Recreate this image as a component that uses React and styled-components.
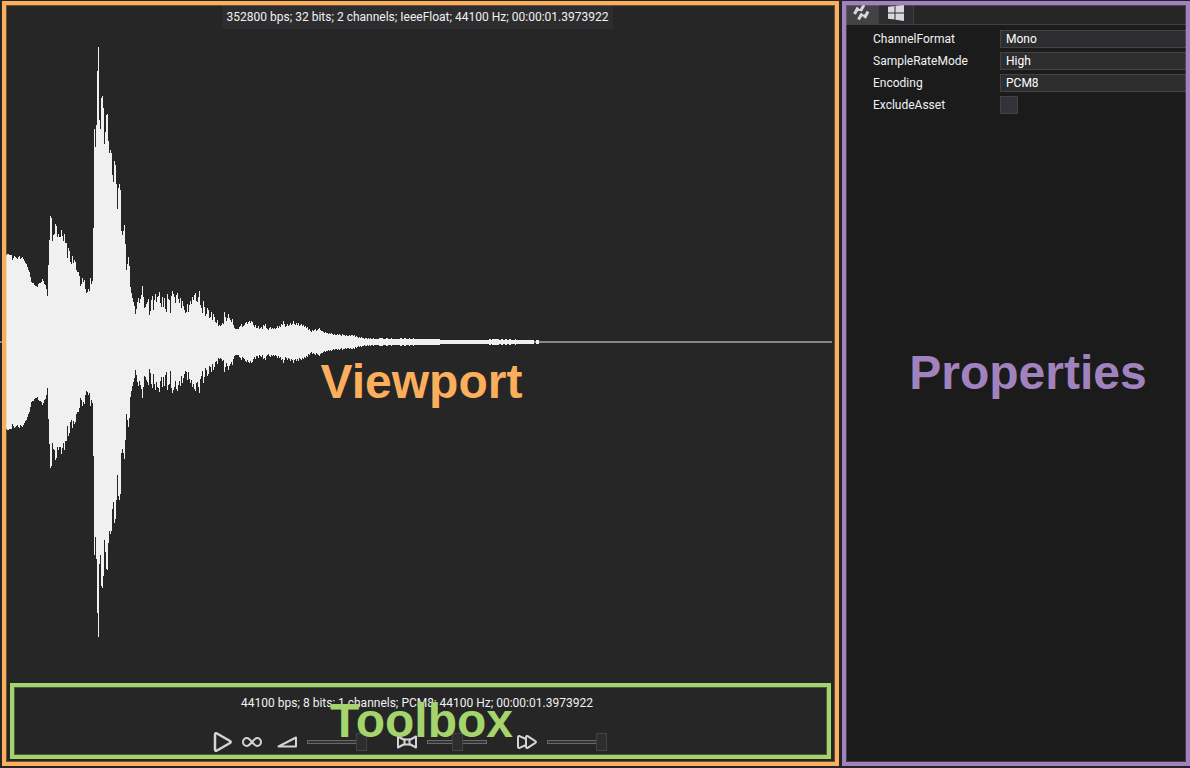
import React from "react";
import styled, { createGlobalStyle } from "styled-components";

const GlobalStyle = createGlobalStyle`
  *, *::before, *::after { box-sizing: border-box; }
  body {
    margin: 0;
    background: #242427;
    color: #f1f1f1;
    font: 400 12px/16px Roboto, "Liberation Sans", sans-serif;
  }
`;

const Page = styled.main`
  display: grid;
  grid-template-columns: 839fr 348fr;
  gap: 3px;
  min-height: 100vh;
  padding: 1px 0 2px;
`;

const Pane = styled.section`
  position: relative;
  display: flex;
  flex-direction: column;
  min-width: 0;
  background: ${(p) => p.$background};
`;

/* Coloured outline with a large caption, laid over the area it names. */
const Callout = styled.div`
  position: absolute;
  inset: 0;
  left: ${(p) => p.$left || 0}px;
  display: flex;
  align-items: center;
  justify-content: center;
  padding: ${(p) => p.$padding || 0};
  border: 4px solid ${(p) => p.$color};
  box-shadow: inset 0 0 0 1px ${(p) => p.$color}50;
  color: ${(p) => p.$color};
  font: 700 48px/56px "Liberation Sans", Arial, sans-serif;
  pointer-events: none;
`;

const Stage = styled.div`
  position: relative;
  flex: 1;
  min-height: 0;
  padding-right: 4px;
`;

const WaveSvg = styled.svg`
  position: absolute;
  inset: 0;
  width: 100%;
  height: 100%;
`;

const SourceInfo = styled.p`
  position: relative;
  width: fit-content;
  margin: 0 auto;
  padding: 8px 5px 4px;
  background: #2d2d30;
`;

const Toolbox = styled.div`
  position: relative;
  height: 76px;
  margin: 0 8px 7px 10px;
  padding: 12px 7px 0 0;
`;

const OutputInfo = styled.p`
  margin: 0 0 20px;
  text-align: center;
`;

const Controls = styled.div`
  display: flex;
  align-items: center;
  justify-content: center;
  gap: 10px;
  height: 22px;
  padding-right: 15px;
`;

const IconButton = styled.button`
  display: flex;
  padding: 0;
  border: 0;
  background: none;
  color: #d4d4d6;
`;

const SliderField = styled.label`
  display: flex;
  align-items: center;
  gap: 10px;
  margin-left: ${(p) => p.$space}px;
  color: #d4d4d6;
`;

const Slider = styled.input`
  appearance: none;
  width: 60px;
  height: 18px;
  margin: 0;
  background: none;

  &::-webkit-slider-runnable-track {
    height: 4px;
    background: #333337;
    box-shadow: inset 0 0 0 1px #69696c;
  }

  &::-webkit-slider-thumb {
    appearance: none;
    width: 11px;
    height: 18px;
    margin-top: -7px;
    border: 1px solid #434346;
    border-radius: 0;
    background: #2d2d30;
  }
`;

const Icon = styled.svg`
  display: block;
  fill: none;
  stroke: currentColor;
  stroke-width: ${(p) => p.$weight || 2};
  stroke-linejoin: round;
  stroke-linecap: round;
`;

const TabBar = styled.div`
  display: flex;
  height: 24px;
  padding-left: 4px;
  border-bottom: 1px solid #3f3f46;
  background: #262626;
`;

const Tab = styled.button`
  display: flex;
  align-items: center;
  justify-content: center;
  width: ${(p) => p.$width}px;
  padding: 0;
  border: 0;
  border-right: 1px solid #3f3f46;
  background: ${(p) => (p.$active ? "#434346" : "#2d2d30")};
  color: #d8d8dc;
`;

const PropertyList = styled.form`
  display: grid;
  grid-template-columns: 127px 1fr;
  grid-auto-rows: 18px;
  row-gap: 4px;
  align-items: center;
  padding: 5px 4px 0 31px;
`;

const Select = styled.select`
  appearance: none;
  width: 100%;
  height: 18px;
  padding: 0 5px;
  border: 1px solid #434346;
  border-right: 0;
  border-radius: 0;
  background: #2d2d30;
  color: #ffffff;
  font: inherit;
`;

const Checkbox = styled.input`
  appearance: none;
  width: 18px;
  height: 18px;
  margin: 0;
  border: 1px solid #434346;
  background: #333337;
`;

/* Peak amplitude of each one-pixel column, starting at FIRST_COLUMN. */
const FIRST_COLUMN = 4;
const PEAKS = [
  87, 87, 87, 88, 88, 87, 87, 87, 82, 84, 86, 85, 84, 83, 85, 86, 83, 84, 85, 83, 81, 79, 78, 75, 72,
  70, 65, 60, 59, 59, 57, 56, 56, 55, 58, 59, 59, 60, 63, 61, 58, 57, 53, 46, 77, 102, 126, 124,
  101, 107, 108, 118, 116, 105, 108, 105, 105, 112, 106, 101, 108, 99, 99, 84, 94, 91, 80, 78, 86,
  79, 82, 80, 72, 70, 70, 66, 56, 58, 64, 60, 62, 53, 49, 50, 53, 51, 64, 58, 61, 114, 213, 195,
  217, 271, 295, 222, 213, 244, 246, 234, 198, 210, 227, 228, 201, 189, 192, 189, 167, 160, 181,
  177, 158, 133, 154, 158, 152, 111, 107, 111, 117, 98, 72, 78, 85, 76, 55, 49, 44, 40, 36, 28,
  33, 40, 44, 39, 43, 47, 56, 45, 34, 35, 38, 40, 43, 27, 31, 42, 46, 32, 42, 48, 40, 45, 46, 50,
  39, 35, 45, 35, 44, 33, 30, 48, 43, 42, 29, 46, 51, 48, 45, 39, 47, 49, 43, 39, 44, 34, 41, 36,
  32, 29, 30, 38, 30, 37, 41, 38, 45, 42, 47, 49, 41, 40, 45, 51, 37, 34, 29, 41, 35, 26, 28, 34,
  32, 24, 25, 30, 22, 28, 25, 20, 19, 22, 16, 17, 16, 17, 19, 18, 30, 25, 21, 24, 28, 24, 22, 20,
  23, 17, 14, 13, 13, 13, 13, 15, 16, 18, 15, 16, 17, 19, 20, 18, 20, 21, 19, 21, 20, 17, 15, 17,
  14, 14, 16, 13, 14, 15, 13, 17, 16, 18, 14, 13, 12, 14, 15, 13, 14, 13, 14, 13, 14, 16, 14, 16,
  15, 18, 17, 21, 18, 15, 16, 18, 16, 17, 19, 17, 18, 21, 18, 17, 19, 17, 19, 16, 17, 18, 16, 17,
  15, 16, 14, 15, 12, 13, 11, 10, 12, 11, 12, 13, 11, 12, 13, 14, 12, 11, 11, 10, 9, 10, 9, 9, 8,
  9, 8, 9, 8, 7, 8, 7, 7, 8, 7, 8, 7, 6, 8, 7, 7, 6, 7, 6, 6, 7, 6, 7, 7, 6, 7, 5, 6, 5, 4, 5, 4,
  5, 4, 4, 3, 4, 4, 3, 4, 3, 4, 3, 3, 4, 3,
];

/* The quiet tail, as [first column, last column, amplitude]. */
const TAIL = [
  [375, 440, 3],
  [379, 383, 4],
  [386, 388, 4],
  [391, 392, 4],
  [400, 402, 4],
  [404, 406, 4],
  [409, 410, 4],
  [413, 414, 4],
  [440, 534, 2],
  [489, 491, 3],
  [492, 499, 3],
  [501, 503, 3],
  [505, 507, 3],
  [509, 511, 3],
  [515, 516, 3],
  [536, 539, 2],
];

const AXIS = 341;

const bodyPath = (() => {
  const columns = PEAKS.map((h, i) => [FIRST_COLUMN + i, h]);
  const top = columns.map(([x, h]) => `V${AXIS - h}H${x + 1}`).join("");
  const bottom = [...columns]
    .reverse()
    .map(([x, h]) => `V${AXIS + h}H${x}`)
    .join("");
  return `M${FIRST_COLUMN} ${AXIS}${top}${bottom}Z`;
})();

const tailPath = TAIL.map(
  ([from, to, h]) => `M${from} ${AXIS - h}H${to}V${AXIS + h}H${from}Z`
).join("");

function Waveform() {
  return (
    <WaveSvg
      viewBox="0 0 839 682"
      preserveAspectRatio="none"
      shapeRendering="crispEdges"
      aria-hidden="true"
    >
      <path d={`M0 ${AXIS - 1}H832V${AXIS + 1}H0Z`} fill="#868886" />
      <path d={bodyPath} fill="#f0f0f0" />
      <path d={tailPath} fill="#f0f0f0" />
    </WaveSvg>
  );
}

function VolumeIcon() {
  return (
    <Icon width="20" height="20" viewBox="0 0 20 20">
      <path d="M1.500 14.500L19 5.500v9z" />
    </Icon>
  );
}

function PanIcon() {
  return (
    <Icon width="20" height="20" viewBox="0 0 20 20">
      <path d="M1 4.500L6.500 7.500h7L19 4.500v11l-5.500-3h-7L1 15.500z" />
      <path d="M7.500 7.500v5M12.500 7.500v5" />
    </Icon>
  );
}

function SpeedIcon() {
  return (
    <Icon width="20" height="20" viewBox="0 0 20 20">
      <path d="M9 7L3 4.300Q1 3.500 1 5.500v9q0 2 2 1.200L9 13" />
      <path d="M9 5.500q0-2 2-1.200L18 8.800q2 1.200 0 2.400l-7 4.500q-2 .8-2-1.200z" />
    </Icon>
  );
}

function AssetIcon() {
  return (
    <svg
      width="18"
      height="18"
      viewBox="1 0 18 18"
      fill="none"
      stroke="currentColor"
      aria-hidden="true"
    >
      <path strokeWidth="3" d="M2.500 10L6 3.500M8.500 7L12 1M6.500 15.500L10 9.500M12.500 14L16 7.500" />
      <path strokeWidth="2" d="M5 6H9M9.500 11.500H13.500" />
    </svg>
  );
}

function WindowsIcon() {
  return (
    <svg width="18" height="18" viewBox="0 0 18 18" fill="currentColor" aria-hidden="true">
      <path d="M1 2.800L7.500 2v6.500H1zM8.500 1.800L17 .8v7.700H8.500zM1 9.500h6.500v6L1 14.800zM8.500 9.500H17V17l-8.500-1.300z" />
    </svg>
  );
}

const sliders = [
  { name: "Volume", value: 100, icon: <VolumeIcon />, space: 5 },
  { name: "Pan", value: 50, icon: <PanIcon />, space: 20 },
  { name: "Speed", value: 100, icon: <SpeedIcon />, space: 20 },
];

const options = [
  { name: "ChannelFormat", value: "Mono" },
  { name: "SampleRateMode", value: "High" },
  { name: "Encoding", value: "PCM8" },
];

export default function App() {
  return (
    <>
      <GlobalStyle />
      <Page>
        <Pane $background="#262626">
          <Stage>
            <Waveform />
            <SourceInfo>
              352800 bps; 32 bits; 2 channels; IeeeFloat; 44100 Hz; 00:00:01.3973922
            </SourceInfo>
          </Stage>
          <Toolbox>
            <OutputInfo>44100 bps; 8 bits; 1 channels; PCM8; 44100 Hz; 00:00:01.3973922</OutputInfo>
            <Controls>
              <IconButton type="button" aria-label="Play">
                <Icon $weight={2.5} width="20" height="20" viewBox="0 0 20 20">
                  <path d="M3 2.500q0-2 2-1L18 9q1.500 1 0 2L5 18.500q-2 1-2-1z" />
                </Icon>
              </IconButton>
              <IconButton type="button" aria-label="Loop">
                <Icon width="20" height="20" viewBox="0 0 20 20">
                  <path d="M10 10C7.500 7 6.500 6 5 6a4 4 0 0 0 0 8c1.500 0 2.500-1 5-4s3.500-4 5-4a4 4 0 0 1 0 8c-1.500 0-2.500-1-5-4z" />
                </Icon>
              </IconButton>
              {sliders.map((s) => (
                <SliderField key={s.name} $space={s.space}>
                  {s.icon}
                  <Slider type="range" aria-label={s.name} defaultValue={s.value} />
                </SliderField>
              ))}
            </Controls>
            <Callout $color="#a4d46c" $padding="0 0 0 2px">
              Toolbox
            </Callout>
          </Toolbox>
          <Callout $color="#fbae5c" $left={2} $padding="0 0 4px 2px">
            Viewport
          </Callout>
        </Pane>
        <Pane $background="#1b1b1c">
          <TabBar>
            <Tab type="button" $width={33} $active aria-label="Asset">
              <AssetIcon />
            </Tab>
            <Tab type="button" $width={35} aria-label="Windows">
              <WindowsIcon />
            </Tab>
          </TabBar>
          <PropertyList>
            {options.map((o) => (
              <React.Fragment key={o.name}>
                <label htmlFor={o.name}>{o.name}</label>
                <Select id={o.name} defaultValue={o.value}>
                  <option>{o.value}</option>
                </Select>
              </React.Fragment>
            ))}
            <label htmlFor="ExcludeAsset">ExcludeAsset</label>
            <Checkbox id="ExcludeAsset" type="checkbox" />
          </PropertyList>
          <Callout $color="#a083be" $padding="0 0 22px 24px">
            Properties
          </Callout>
        </Pane>
      </Page>
    </>
  );
}
